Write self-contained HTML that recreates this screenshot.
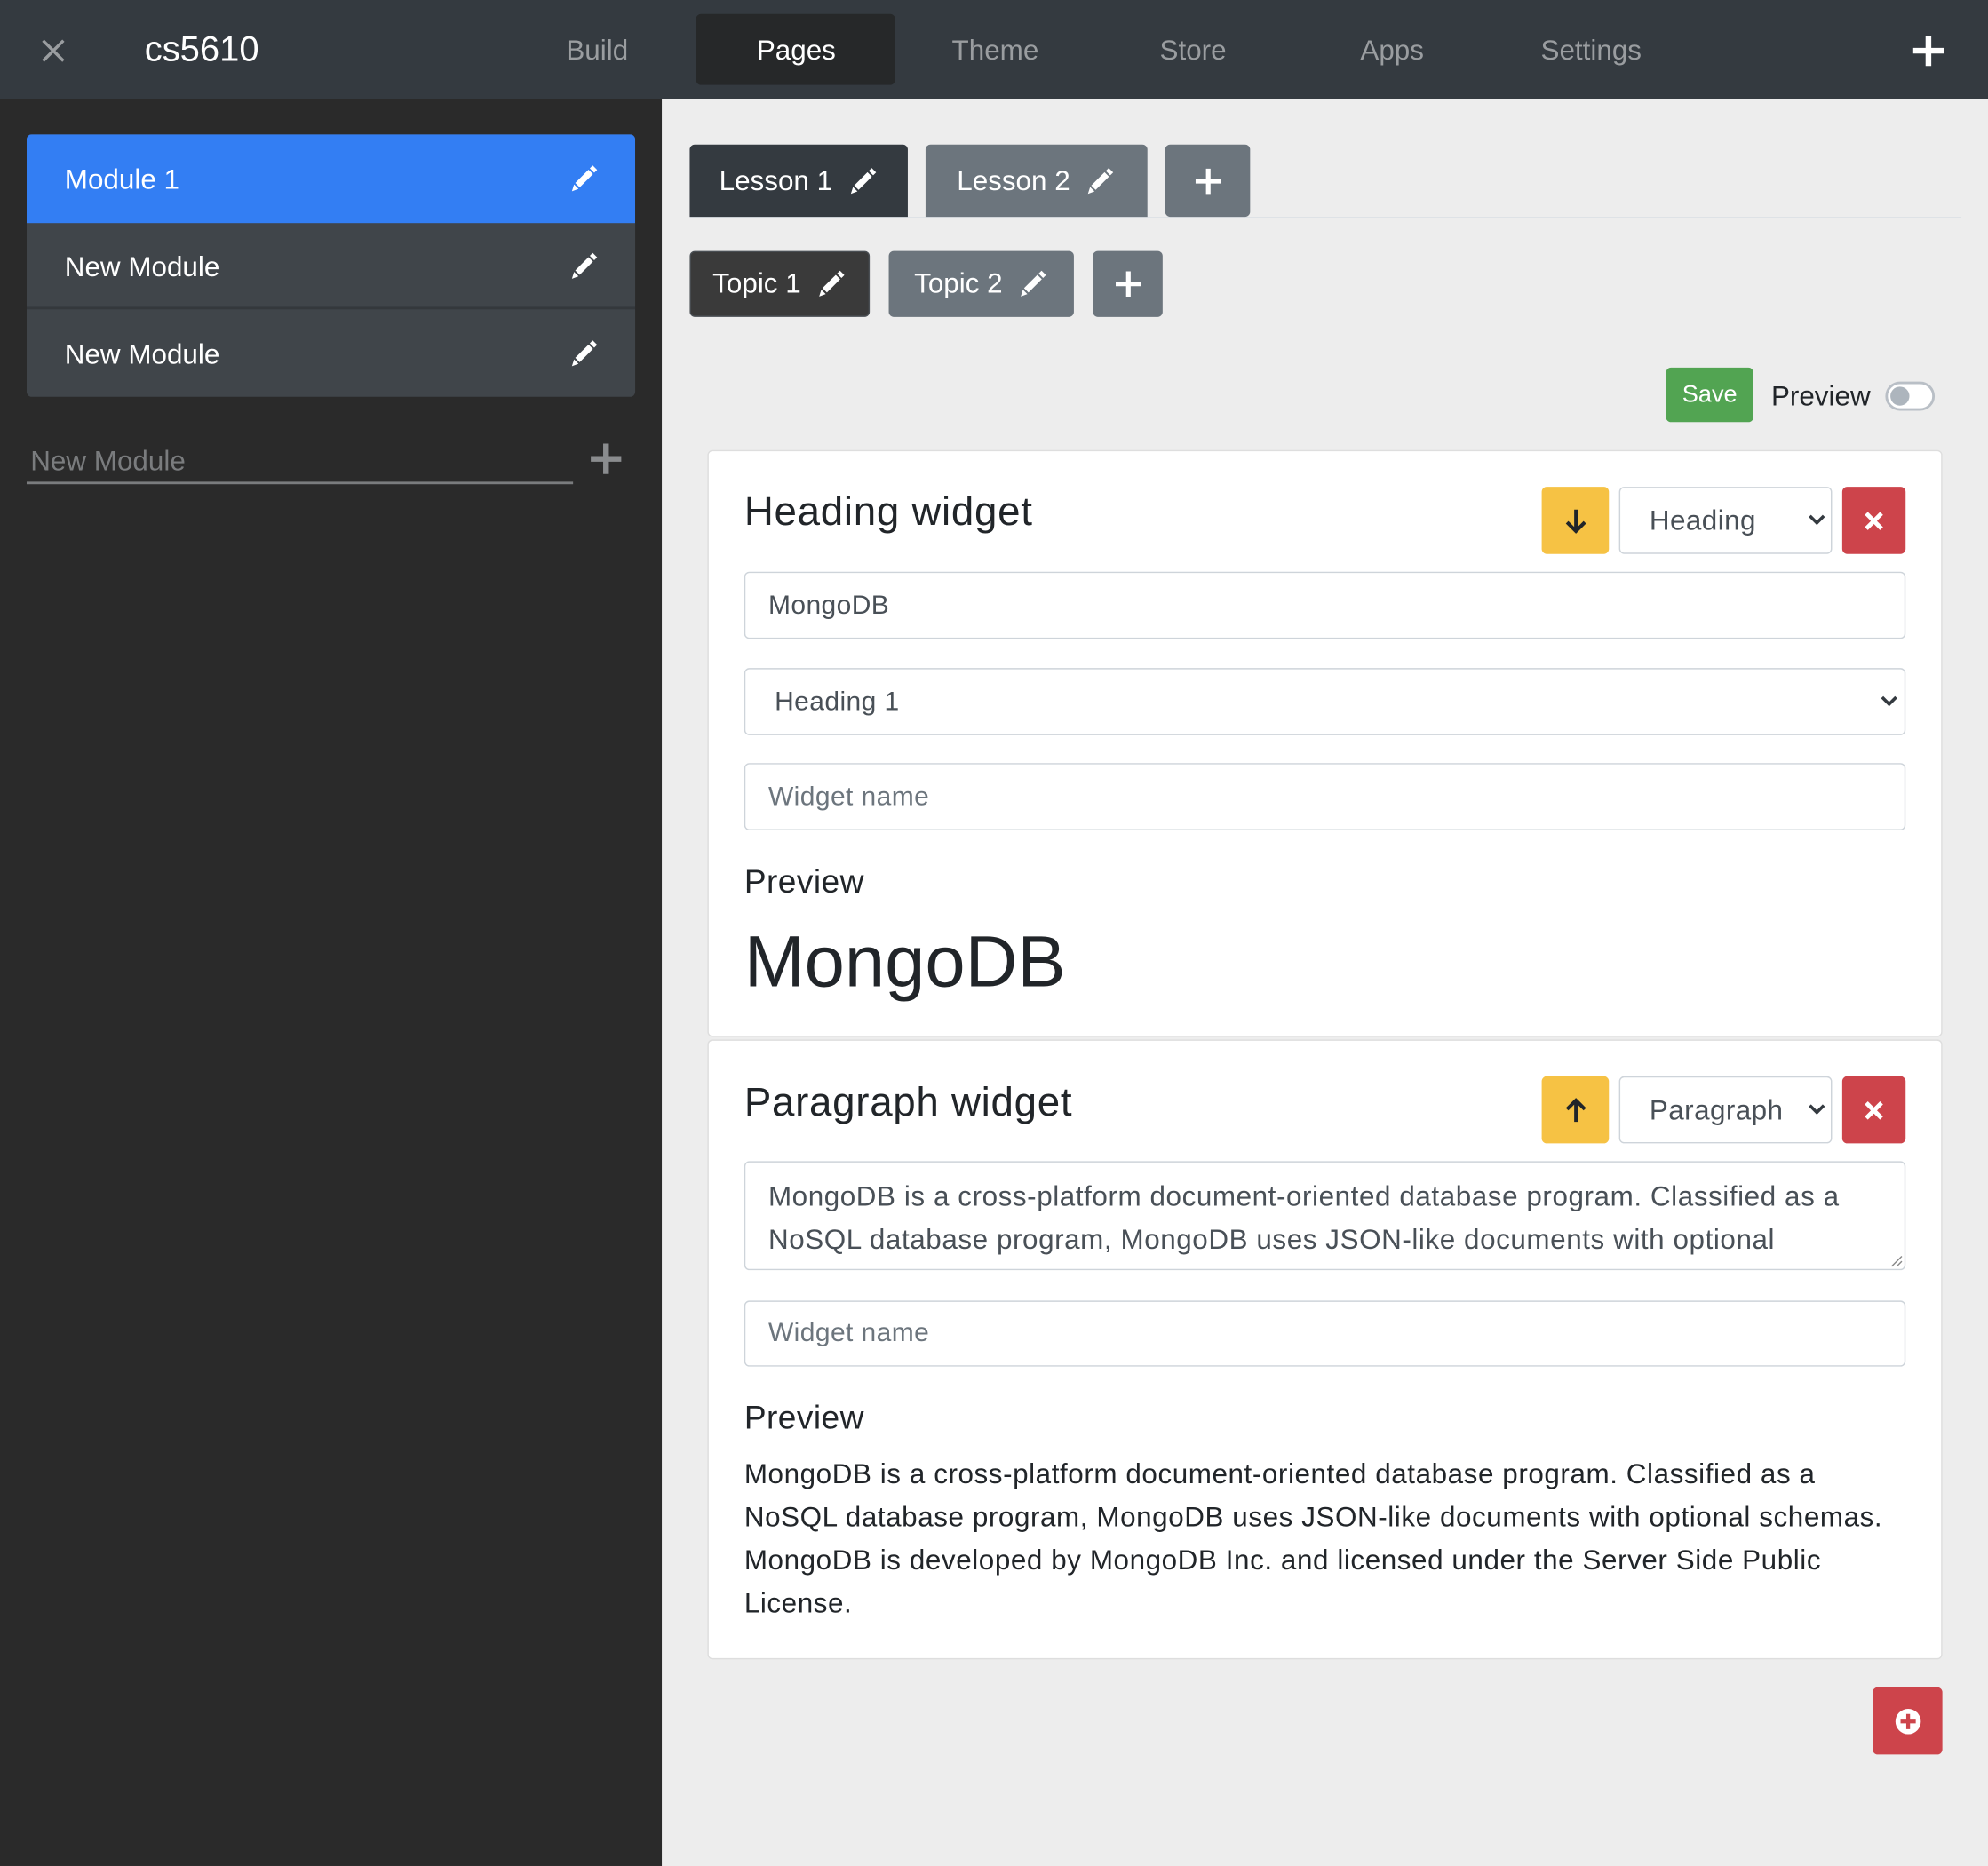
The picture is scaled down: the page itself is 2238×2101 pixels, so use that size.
<!DOCTYPE html>
<html><head><meta charset="utf-8"><style>
*{box-sizing:border-box;margin:0;padding:0}
html,body{width:2238px;height:2100px;overflow:hidden;background:#ededed}
#s{position:absolute;left:0;top:0;width:1568px;height:1472px;transform:scale(1.4273);transform-origin:0 0;font-family:"Liberation Sans",Arial,sans-serif;background:#ededed}
.a{position:absolute}
.t{white-space:nowrap}
.nav{position:absolute;top:27px;font-size:22px;color:#9a9da0;transform:translateX(-50%)}
.btn{position:absolute;border-radius:4px;color:#fff;font-size:22px;display:flex;align-items:center;justify-content:center}
.inp{position:absolute;left:587px;width:916px;height:53px;border:1px solid #ced4da;border-radius:4px;background:#fff;font-size:21px;color:#495057;padding-left:18px;display:flex;align-items:center;letter-spacing:0.3px}
svg{display:block}
</style></head><body><div id="s">
<div class="a" style="left:0;top:0;width:1568px;height:78px;background:#343a40"></div>
<svg class="a" style="left:32px;top:30px" width="20" height="20" viewBox="0 0 20 20"><path d="M2 2L18 18M18 2L2 18" stroke="#9a9da0" stroke-width="2.4"/></svg>
<div class="a t" style="left:114px;top:23px;font-size:28px;color:#fff">cs5610</div>
<div class="nav" style="left:471px">Build</div>
<div class="a" style="left:549px;top:11px;width:157px;height:56px;background:#262829;border-radius:4px"></div>
<div class="nav" style="left:628px;color:#fff">Pages</div>
<div class="nav" style="left:785px">Theme</div>
<div class="nav" style="left:941px">Store</div>
<div class="nav" style="left:1098px">Apps</div>
<div class="nav" style="left:1255px">Settings</div>
<svg class="a" style="left:1507px;top:26px" width="28" height="28" viewBox="0 0 28 28"><path d="M14 2V26M2 14H26" stroke="#fff" stroke-width="4.5"/></svg>
<div class="a" style="left:0;top:78px;width:522px;height:1394px;background:#2a2a2a"></div>
<div class="a" style="left:21px;top:106px;width:480px;height:207px;background:#40454a;border-radius:4px;overflow:hidden">
 <div style="height:70px;background:#337ef3"></div>
 <div style="height:68px;border-bottom:2px solid #34383c"></div>
</div>
<div class="a t" style="left:51px;top:129px;font-size:22px;color:#fff">Module 1</div>
<div class="a t" style="left:51px;top:198px;font-size:22px;color:#fff">New Module</div>
<div class="a t" style="left:51px;top:267px;font-size:22px;color:#fff">New Module</div>
<svg class="a" style="left:449px;top:129px" width="24" height="24" viewBox="0 0 24 24"><path d="M18.5 1.5l3.5 3.5-2.3 2.3-3.5-3.5z M15.2 4.8l3.5 3.5L8.2 18.8l-3.5-3.5z M3.8 16.5l3.5 3.5-5.2 1.9z" fill="#fff"/></svg>
<svg class="a" style="left:449px;top:198px" width="24" height="24" viewBox="0 0 24 24"><path d="M18.5 1.5l3.5 3.5-2.3 2.3-3.5-3.5z M15.2 4.8l3.5 3.5L8.2 18.8l-3.5-3.5z M3.8 16.5l3.5 3.5-5.2 1.9z" fill="#fff"/></svg>
<svg class="a" style="left:449px;top:267px" width="24" height="24" viewBox="0 0 24 24"><path d="M18.5 1.5l3.5 3.5-2.3 2.3-3.5-3.5z M15.2 4.8l3.5 3.5L8.2 18.8l-3.5-3.5z M3.8 16.5l3.5 3.5-5.2 1.9z" fill="#fff"/></svg>
<div class="a t" style="left:24px;top:351px;font-size:22px;color:#7a7c7e">New Module</div>
<div class="a" style="left:21px;top:380px;width:431px;height:2px;background:#7a7c7e"></div>
<svg class="a" style="left:464px;top:348px" width="28" height="28" viewBox="0 0 28 28"><path d="M14 2V26M2 14H26" stroke="#8a8c8e" stroke-width="4.5"/></svg>
<div class="a" style="left:544px;top:171px;width:1003px;height:1px;background:#dde2e6"></div>
<div class="btn" style="left:544px;top:114px;width:172px;height:57px;background:#343a40;border-radius:4px 4px 0 0">Lesson 1&nbsp;&nbsp;<svg width="24" height="24" viewBox="0 0 24 24"><path d="M18.5 1.5l3.5 3.5-2.3 2.3-3.5-3.5z M15.2 4.8l3.5 3.5L8.2 18.8l-3.5-3.5z M3.8 16.5l3.5 3.5-5.2 1.9z" fill="#fff"/></svg></div>
<div class="btn" style="left:730px;top:114px;width:175px;height:57px;background:#6c757d;border-radius:4px 4px 0 0">Lesson 2&nbsp;&nbsp;<svg width="24" height="24" viewBox="0 0 24 24"><path d="M18.5 1.5l3.5 3.5-2.3 2.3-3.5-3.5z M15.2 4.8l3.5 3.5L8.2 18.8l-3.5-3.5z M3.8 16.5l3.5 3.5-5.2 1.9z" fill="#fff"/></svg></div>
<div class="btn" style="left:919px;top:114px;width:67px;height:57px;background:#6c757d"><svg width="22" height="22" viewBox="0 0 22 22"><path d="M11 1V21M1 11H21" stroke="#fff" stroke-width="3.6"/></svg></div>
<div class="btn" style="left:544px;top:198px;width:142px;height:52px;background:#3a3a3a;border:1px solid #4a4f54">Topic 1&nbsp;&nbsp;<svg width="24" height="24" viewBox="0 0 24 24"><path d="M18.5 1.5l3.5 3.5-2.3 2.3-3.5-3.5z M15.2 4.8l3.5 3.5L8.2 18.8l-3.5-3.5z M3.8 16.5l3.5 3.5-5.2 1.9z" fill="#fff"/></svg></div>
<div class="btn" style="left:701px;top:198px;width:146px;height:52px;background:#6c757d">Topic 2&nbsp;&nbsp;<svg width="24" height="24" viewBox="0 0 24 24"><path d="M18.5 1.5l3.5 3.5-2.3 2.3-3.5-3.5z M15.2 4.8l3.5 3.5L8.2 18.8l-3.5-3.5z M3.8 16.5l3.5 3.5-5.2 1.9z" fill="#fff"/></svg></div>
<div class="btn" style="left:862px;top:198px;width:55px;height:52px;background:#6c757d"><svg width="22" height="22" viewBox="0 0 22 22"><path d="M11 1V21M1 11H21" stroke="#fff" stroke-width="3.6"/></svg></div>
<div class="btn" style="left:1314px;top:290px;width:69px;height:43px;background:#52a452;font-size:19px">Save</div>
<div class="a t" style="left:1397px;top:300px;font-size:22px;color:#212529">Preview</div>
<div class="a" style="left:1487px;top:301px;width:39px;height:23px;border:2px solid #b9bfc6;border-radius:12px;background:#fff"></div>
<div class="a" style="left:1491px;top:305px;width:15px;height:15px;border-radius:50%;background:#adb5bd"></div>
<div class="a" style="left:558px;top:355px;width:974px;height:463px;background:#fff;border:1px solid #dedede;border-radius:4px"></div>
<div class="a t" style="left:587px;top:385px;font-size:32px;color:#212529;letter-spacing:0.5px">Heading widget</div>
<div class="btn" style="left:1216px;top:384px;width:53px;height:53px;background:#f6c244"><svg width="20" height="22" viewBox="0 0 20 22"><path d="M10 2V19M3 12l7 7 7-7" stroke="#212529" stroke-width="2.8" fill="none"/></svg></div>
<div class="a" style="left:1277px;top:384px;width:168px;height:53px;border:1px solid #ced4da;border-radius:4px;background:#fff"></div>
<div class="a t" style="left:1301px;top:398px;font-size:22px;color:#495057;letter-spacing:0.3px">Heading</div>
<svg class="a" style="left:1426px;top:405px" width="14" height="10" viewBox="0 0 14 10"><path d="M1.5 2l5.5 5.5L12.5 2" stroke="#343a40" stroke-width="2.5" fill="none"/></svg>
<div class="btn" style="left:1453px;top:384px;width:50px;height:53px;background:#cd444b"><svg width="16" height="16" viewBox="0 0 16 16"><path d="M2 2L14 14M14 2L2 14" stroke="#fff" stroke-width="3.4"/></svg></div>
<div class="inp" style="top:451px">MongoDB</div>
<div class="inp" style="top:527px;padding-left:23px;color:#495057">Heading 1</div>
<svg class="a" style="left:1483px;top:548px" width="14" height="10" viewBox="0 0 14 10"><path d="M1.5 2l5.5 5.5L12.5 2" stroke="#343a40" stroke-width="2.5" fill="none"/></svg>
<div class="inp" style="top:602px;color:#6c757d">Widget name</div>
<div class="a t" style="left:587px;top:680px;font-size:26px;color:#212529;letter-spacing:0.3px">Preview</div>
<div class="a t" style="left:587px;top:726px;font-size:57px;color:#212529">MongoDB</div>
<div class="a" style="left:558px;top:820px;width:974px;height:489px;background:#fff;border:1px solid #dedede;border-radius:4px"></div>
<div class="a t" style="left:587px;top:851px;font-size:32px;color:#212529;letter-spacing:0.5px">Paragraph widget</div>
<div class="btn" style="left:1216px;top:849px;width:53px;height:53px;background:#f6c244"><svg width="20" height="22" viewBox="0 0 20 22"><path d="M10 20V3M3 10l7-7 7 7" stroke="#212529" stroke-width="2.8" fill="none"/></svg></div>
<div class="a" style="left:1277px;top:849px;width:168px;height:53px;border:1px solid #ced4da;border-radius:4px;background:#fff"></div>
<div class="a t" style="left:1301px;top:863px;font-size:22px;color:#495057;letter-spacing:0.3px">Paragraph</div>
<svg class="a" style="left:1426px;top:870px" width="14" height="10" viewBox="0 0 14 10"><path d="M1.5 2l5.5 5.5L12.5 2" stroke="#343a40" stroke-width="2.5" fill="none"/></svg>
<div class="btn" style="left:1453px;top:849px;width:50px;height:53px;background:#cd444b"><svg width="16" height="16" viewBox="0 0 16 16"><path d="M2 2L14 14M14 2L2 14" stroke="#fff" stroke-width="3.4"/></svg></div>
<div class="inp" style="top:916px;height:86px;align-items:flex-start;padding-top:10px;line-height:34px;font-size:22px;letter-spacing:0.4px;white-space:nowrap">MongoDB is a cross-platform document-oriented database program. Classified as a<br>NoSQL database program, MongoDB uses JSON-like documents with optional</div>
<svg class="a" style="left:1489px;top:988px" width="12" height="12" viewBox="0 0 12 12"><path d="M11 3L3 11M11 7L7 11" stroke="#888" stroke-width="1"/></svg>
<div class="inp" style="top:1026px;height:52px;color:#6c757d">Widget name</div>
<div class="a t" style="left:587px;top:1103px;font-size:26px;color:#212529;letter-spacing:0.3px">Preview</div>
<div class="a t" style="left:587px;top:1146px;font-size:22px;letter-spacing:0.4px;line-height:34px;color:#212529">MongoDB is a cross-platform document-oriented database program. Classified as a<br>NoSQL database program, MongoDB uses JSON-like documents with optional schemas.<br>MongoDB is developed by MongoDB Inc. and licensed under the Server Side Public<br>License.</div>
<div class="btn" style="left:1477px;top:1331px;width:55px;height:53px;background:#cd444b"><svg width="22" height="22" viewBox="0 0 22 22"><circle cx="11" cy="11" r="10" fill="#fff"/><path d="M11 5V17M5 11H17" stroke="#cd444b" stroke-width="3"/></svg></div>
</div></body></html>
